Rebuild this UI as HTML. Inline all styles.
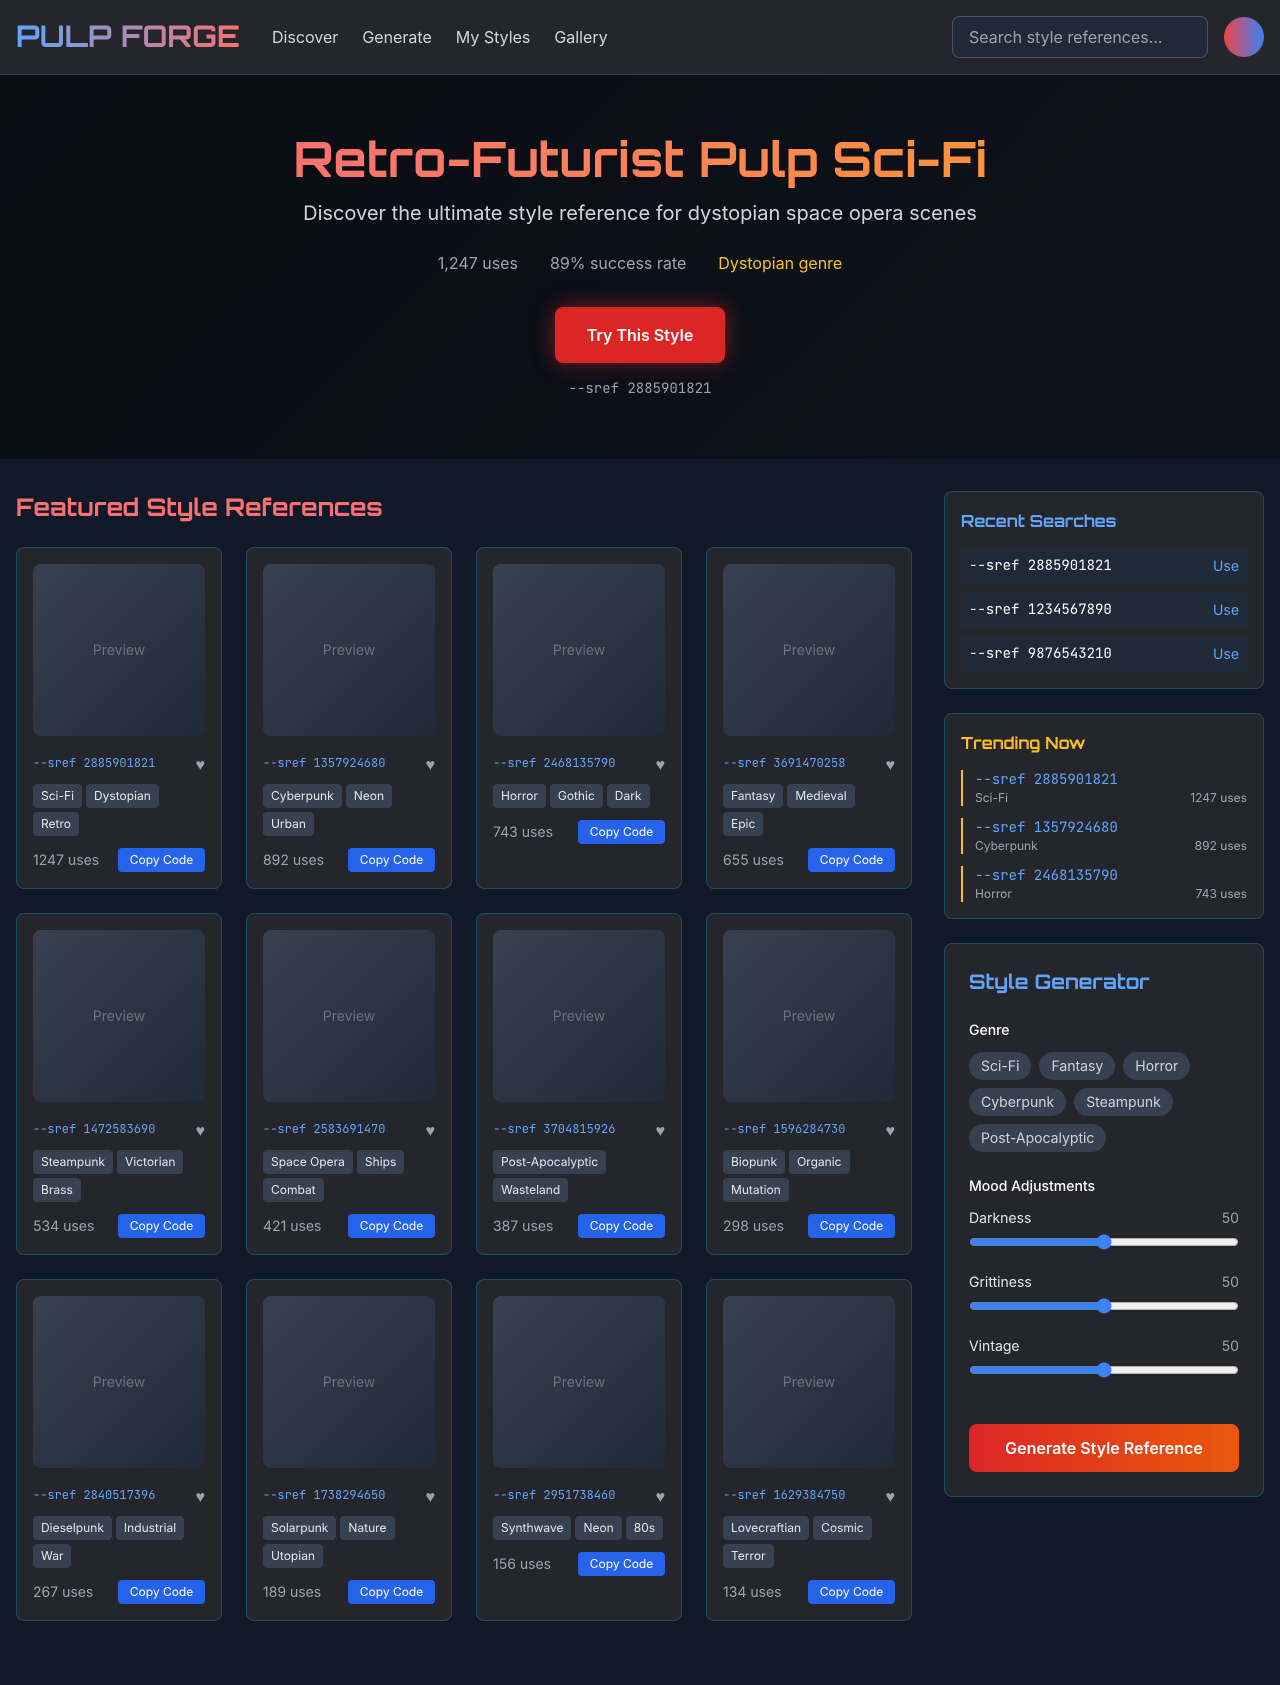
<!DOCTYPE html>
<html lang="en"><head><meta charset="utf-8"><title>Pulp Forge</title>
<style>
*{box-sizing:border-box;margin:0;padding:0}
html,body{width:1280px;height:1685px;overflow:hidden}
body{background:#111827;color:#fff;font-family:"Inter","Liberation Sans",sans-serif;position:relative}
.orb{font-family:"Orbitron","DejaVu Sans",sans-serif;font-weight:700}
.mono{font-family:"JetBrains Mono","Liberation Mono",monospace;font-variant-ligatures:none;font-feature-settings:"calt" 0,"liga" 0}
header{height:75px;background:#25262b;border-bottom:1px solid #374151;padding:16px;display:flex;align-items:center;justify-content:space-between}
.left{display:flex;align-items:center}
.logo{font-size:30px;line-height:36px;width:224px;white-space:nowrap;background:linear-gradient(90deg,#60a5fa,#f87171);-webkit-background-clip:text;background-clip:text;color:transparent}
nav{display:flex;gap:24px;margin-left:32px;color:#d1d5db;font-size:16px}
.right{display:flex;align-items:center;gap:16px}
.search{width:256px;height:42px;background:#1f2937;border:1px solid #4b5563;border-radius:8px;padding:0 16px;line-height:40px;color:#9ca3af;font-size:16px}
.avatar{width:40px;height:40px;border-radius:50%;background:linear-gradient(90deg,#ef4444,#3b82f6)}
.hero{height:384px;background:linear-gradient(135deg,#090c13,#0f131b);text-align:center;padding-top:48px;position:relative}
.hero h1{display:inline-block;position:relative;top:6px;font-size:48px;line-height:60px;white-space:nowrap;background:linear-gradient(90deg,#f87171,#fb923c);-webkit-background-clip:text;background-clip:text;color:transparent;vertical-align:top}
.hero p{font-size:20px;line-height:28px;color:#d1d5db;margin-top:16px}
.stats{display:flex;justify-content:center;gap:32px;color:#9ca3af;font-size:16px;line-height:24px;margin-top:24px}
.stats b{font-weight:400;color:#fbbf24}
.try{position:absolute;left:555px;top:232px;width:170px;height:56px;line-height:56px;background:#dc2626;border-radius:8px;font-weight:600;font-size:16px;box-shadow:0 0 20px rgba(220,38,38,.5)}
.code{position:absolute;left:0;right:0;top:304px;font-size:14px;line-height:20px;color:#9ca3af}
h2{position:absolute;left:16px;top:491px;font-size:24px;line-height:32px;color:#f87171;white-space:nowrap}
.grid{position:absolute;left:16px;top:547px;width:896px;display:grid;grid-template-columns:repeat(4,206px);grid-auto-rows:342px;gap:24px}
.card{background:#25262b;border:1px solid #1a4d68;border-radius:8px;padding:16px}
.prev{height:172px;border-radius:8px;background:linear-gradient(135deg,#374151,#1f2937);display:flex;align-items:center;justify-content:center;color:#6b7280;font-size:14px}
.sr{display:flex;justify-content:space-between;height:24px;margin:16px 0 8px;font-size:12px;line-height:23px;color:#60a5fa}
.sr i{font-style:normal;font-family:"Liberation Sans",sans-serif;color:#9ca3af;font-size:16px;line-height:28px}
.tags{display:flex;flex-wrap:wrap;gap:4px;margin-bottom:12px}
.tags span{height:24px;line-height:24px;padding:0 8px;font-size:12px;background:#374151;color:#e5e7eb;border-radius:4px}
.foot{display:flex;justify-content:space-between;align-items:center;font-size:14px;color:#9ca3af}
.foot a{width:87px;height:24px;line-height:24px;text-align:center;background:#2563eb;color:#fff;font-size:12px;border-radius:4px}
.side{position:absolute;left:944px;width:320px;background:#25262b;border:1px solid #1a4d68;border-radius:8px;padding:16px}
.side h3{font-size:16px;line-height:26px;margin-bottom:14px;white-space:nowrap}
.rec{height:36px;background:#1f2937;border-radius:4px;padding:0 8px;display:flex;justify-content:space-between;align-items:center;font-size:14px;margin-bottom:8px}
.rec a{color:#60a5fa}
.tr{height:36px;border-left:2px solid #fbbf24;padding-left:12px;margin-bottom:12px}
.tr div{font-size:14px;line-height:21px;height:20px;color:#60a5fa}
.tr p{display:flex;justify-content:space-between;font-size:12px;line-height:16px;color:#9ca3af}
.gen{padding:24px}
.gen h3{font-size:20px;line-height:28px;color:#60a5fa;margin-bottom:0}
.lb{position:absolute;left:24px;font-size:14px;font-weight:500;line-height:20px}
.pills{position:absolute;left:24px;width:272px;top:100px;display:flex;flex-wrap:wrap;gap:8px}
.pills span{height:28px;line-height:29px;padding:0 12px;background:#374151;color:#d1d5db;font-size:14px;border-radius:14px}
.m{position:absolute;left:24px;width:270px;display:flex;justify-content:space-between;font-size:14px;line-height:20px;color:#e5e7eb}
.m b{font-weight:400;color:#9ca3af}
.sl{position:absolute;left:24px;width:270px;height:16px;margin:0;accent-color:#3b82f6}
.go{position:absolute;left:24px;top:480px;width:270px;height:48px;line-height:48px;text-align:center;border-radius:8px;font-weight:600;font-size:16px;background:linear-gradient(90deg,#dc2626,#ea580c)}
</style></head><body>
<header><div class="left"><div class="logo orb">PULP FORGE</div><nav><span>Discover</span><span>Generate</span><span>My Styles</span><span>Gallery</span></nav></div>
<div class="right"><div class="search">Search style references...</div><div class="avatar"></div></div></header>
<section class="hero"><h1 class="orb">Retro-Futurist Pulp Sci-Fi</h1><p>Discover the ultimate style reference for dystopian space opera scenes</p>
<div class="stats"><span>1,247 uses</span><span>89% success rate</span><b>Dystopian genre</b></div>
<div class="try">Try This Style</div><div class="code mono">--sref 2885901821</div></section>
<h2 class="orb">Featured Style References</h2>
<div class="grid">
<div class="card"><div class="prev">Preview</div><div class="sr mono"><span>--sref 2885901821</span><i>♥</i></div><div class="tags"><span>Sci-Fi</span><span>Dystopian</span><span>Retro</span></div><div class="foot"><span>1247 uses</span><a>Copy Code</a></div></div>
<div class="card"><div class="prev">Preview</div><div class="sr mono"><span>--sref 1357924680</span><i>♥</i></div><div class="tags"><span>Cyberpunk</span><span>Neon</span><span>Urban</span></div><div class="foot"><span>892 uses</span><a>Copy Code</a></div></div>
<div class="card"><div class="prev">Preview</div><div class="sr mono"><span>--sref 2468135790</span><i>♥</i></div><div class="tags"><span>Horror</span><span>Gothic</span><span>Dark</span></div><div class="foot"><span>743 uses</span><a>Copy Code</a></div></div>
<div class="card"><div class="prev">Preview</div><div class="sr mono"><span>--sref 3691470258</span><i>♥</i></div><div class="tags"><span>Fantasy</span><span>Medieval</span><span>Epic</span></div><div class="foot"><span>655 uses</span><a>Copy Code</a></div></div>
<div class="card"><div class="prev">Preview</div><div class="sr mono"><span>--sref 1472583690</span><i>♥</i></div><div class="tags"><span>Steampunk</span><span>Victorian</span><span>Brass</span></div><div class="foot"><span>534 uses</span><a>Copy Code</a></div></div>
<div class="card"><div class="prev">Preview</div><div class="sr mono"><span>--sref 2583691470</span><i>♥</i></div><div class="tags"><span>Space Opera</span><span>Ships</span><span>Combat</span></div><div class="foot"><span>421 uses</span><a>Copy Code</a></div></div>
<div class="card"><div class="prev">Preview</div><div class="sr mono"><span>--sref 3704815926</span><i>♥</i></div><div class="tags"><span>Post-Apocalyptic</span><span>Wasteland</span></div><div class="foot"><span>387 uses</span><a>Copy Code</a></div></div>
<div class="card"><div class="prev">Preview</div><div class="sr mono"><span>--sref 1596284730</span><i>♥</i></div><div class="tags"><span>Biopunk</span><span>Organic</span><span>Mutation</span></div><div class="foot"><span>298 uses</span><a>Copy Code</a></div></div>
<div class="card"><div class="prev">Preview</div><div class="sr mono"><span>--sref 2840517396</span><i>♥</i></div><div class="tags"><span>Dieselpunk</span><span>Industrial</span><span>War</span></div><div class="foot"><span>267 uses</span><a>Copy Code</a></div></div>
<div class="card"><div class="prev">Preview</div><div class="sr mono"><span>--sref 1738294650</span><i>♥</i></div><div class="tags"><span>Solarpunk</span><span>Nature</span><span>Utopian</span></div><div class="foot"><span>189 uses</span><a>Copy Code</a></div></div>
<div class="card"><div class="prev">Preview</div><div class="sr mono"><span>--sref 2951738460</span><i>♥</i></div><div class="tags"><span>Synthwave</span><span>Neon</span><span>80s</span></div><div class="foot"><span>156 uses</span><a>Copy Code</a></div></div>
<div class="card"><div class="prev">Preview</div><div class="sr mono"><span>--sref 1629384750</span><i>♥</i></div><div class="tags"><span>Lovecraftian</span><span>Cosmic</span><span>Terror</span></div><div class="foot"><span>134 uses</span><a>Copy Code</a></div></div>
</div>
<aside class="side" style="top:491px;height:198px"><h3 class="orb" style="color:#60a5fa">Recent Searches</h3>
<div class="rec mono"><span>--sref 2885901821</span><a style="font-family:'Inter','Liberation Sans',sans-serif">Use</a></div>
<div class="rec mono"><span>--sref 1234567890</span><a style="font-family:'Inter','Liberation Sans',sans-serif">Use</a></div>
<div class="rec mono"><span>--sref 9876543210</span><a style="font-family:'Inter','Liberation Sans',sans-serif">Use</a></div></aside>
<aside class="side" style="top:713px;height:206px"><h3 class="orb" style="color:#fbbf24">Trending Now</h3>
<div class="tr"><div class="mono">--sref 2885901821</div><p><span>Sci-Fi</span><span>1247 uses</span></p></div>
<div class="tr"><div class="mono">--sref 1357924680</div><p><span>Cyberpunk</span><span>892 uses</span></p></div>
<div class="tr"><div class="mono">--sref 2468135790</div><p><span>Horror</span><span>743 uses</span></p></div></aside>
<aside class="side gen" style="top:943px;height:554px"><h3 class="orb">Style Generator</h3>
<div class="lb" style="top:77px">Genre</div>
<div class="pills" style="top:108px"><span>Sci-Fi</span><span>Fantasy</span><span>Horror</span><span>Cyberpunk</span><span>Steampunk</span><span>Post-Apocalyptic</span></div>
<div class="lb" style="top:233px">Mood Adjustments</div>
<div class="m" style="top:265px"><span>Darkness</span><b>50</b></div><input class="sl" type="range" value="50" style="top:290px">
<div class="m" style="top:329px"><span>Grittiness</span><b>50</b></div><input class="sl" type="range" value="50" style="top:354px">
<div class="m" style="top:393px"><span>Vintage</span><b>50</b></div><input class="sl" type="range" value="50" style="top:418px">
<div class="go">Generate Style Reference</div></aside>
</body></html>
